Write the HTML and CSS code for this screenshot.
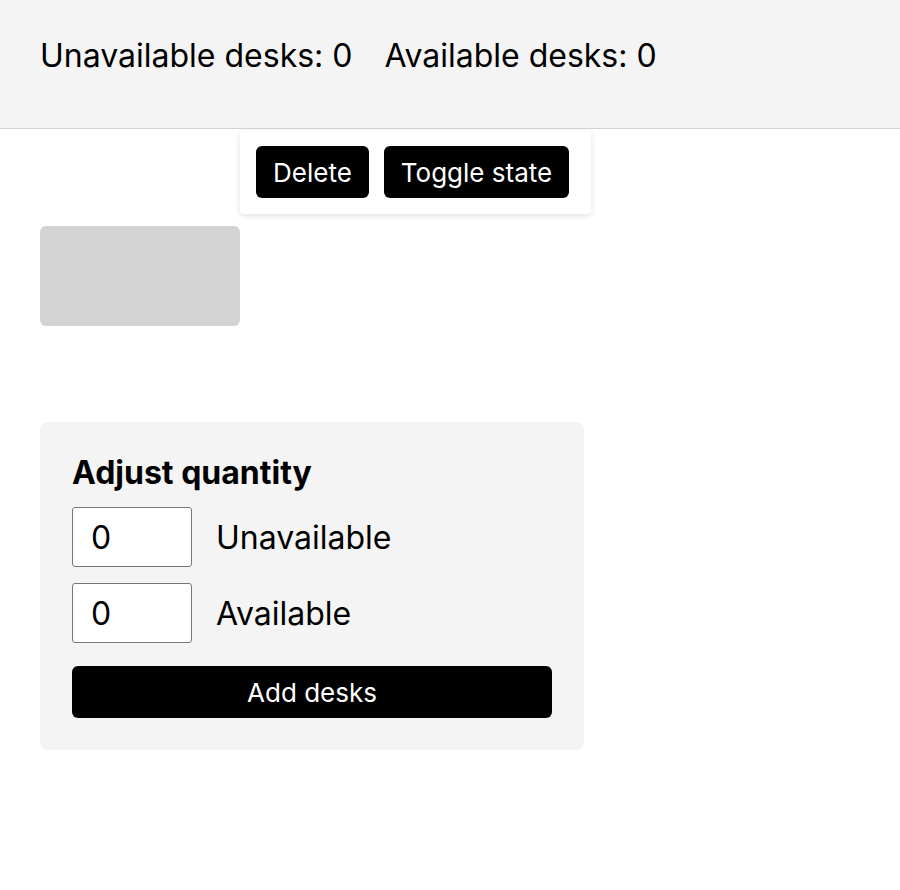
FILE: index.html
```html
<!DOCTYPE html>
<html lang="en">
<head>
  <meta charset="UTF-8" />
  <title>Desk planner</title>
  <meta name="viewport" content="width=device-width, initial-scale=1.0" />
  <link rel="stylesheet" href="styles.css">
</head>
<body>
  <header class="stats">
    <span>Unavailable desks: 0</span>
    <span>Available desks: 0</span>
  </header>

  <main class="floor">
    <div class="toolbar">
      <button class="btn">Delete</button>
      <button class="btn">Toggle state</button>
    </div>

    <div class="desk"></div>

    <section class="panel">
      <h2>Adjust quantity</h2>
      <label class="row">
        <input class="qty" type="text" value="0">
        <span>Unavailable</span>
      </label>
      <label class="row">
        <input class="qty" type="text" value="0">
        <span>Available</span>
      </label>
      <button class="btn btn-wide">Add desks</button>
    </section>
  </main>
</body>
</html>
```

FILE: styles.css
```css
body {
  font-family: 'Inter', 'DejaVu Sans', sans-serif;
  margin: 0;
  color: #000;
  background: #fff;
}
.stats {
  display: flex;
  gap: 32px;
  height: 92px;
  padding: 36px 40px 0;
  background: #f4f4f4;
  border-bottom: 1px solid #d4d4d4;
  font-size: 32px;
  line-height: 40px;
}
.floor {
  position: relative;
  padding: 97px 40px 0;
}
.toolbar {
  position: absolute;
  left: 240px;
  top: 1px;
  display: flex;
  gap: 15px;
  padding: 16px 22px 16px 16px;
  background: #fff;
  border-radius: 4px;
  box-shadow: 0 2px 6px rgba(0, 0, 0, 0.12);
}
.btn {
  font-family: inherit;
  font-size: 26px;
  height: 52px;
  padding: 0 17px;
  border: none;
  border-radius: 6px;
  background: #000;
  color: #fff;
}
.desk {
  width: 200px;
  height: 100px;
  background: #d4d4d4;
  border-radius: 6px;
}
.panel {
  width: 544px;
  box-sizing: border-box;
  margin-top: 96px;
  padding: 32px;
  background: #f4f4f4;
  border-radius: 8px;
  display: flex;
  flex-direction: column;
  gap: 16px;
}
.panel h2 {
  margin: 0;
  font-size: 32px;
  line-height: 37px;
  font-weight: 700;
}
.row {
  display: flex;
  align-items: center;
  gap: 24px;
  font-size: 32px;
}
.qty {
  width: 120px;
  height: 60px;
  box-sizing: border-box;
  padding: 0 18px;
  border: 1px solid #777;
  border-radius: 3px;
  font-family: inherit;
  font-size: 32px;
  background: #fff;
}
.btn-wide {
  width: 480px;
  margin-top: 7px;
}
```
